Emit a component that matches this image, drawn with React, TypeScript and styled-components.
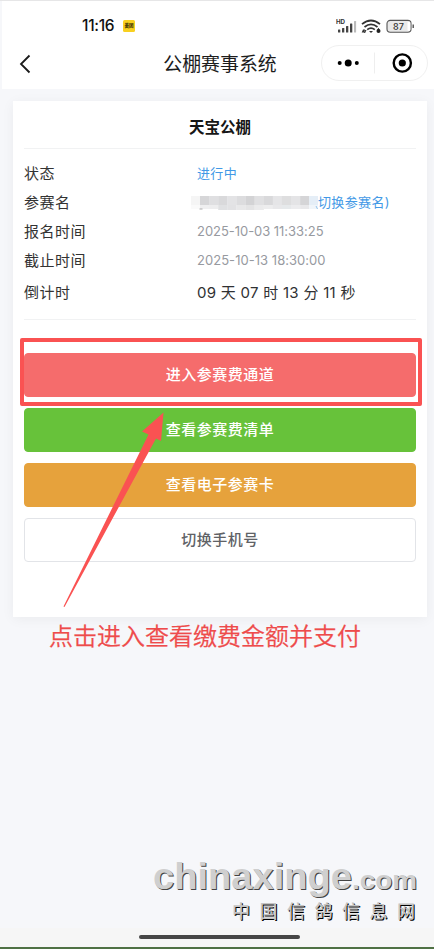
import React from "react";
import styled, { createGlobalStyle } from "styled-components";

const Global = createGlobalStyle`
  * { box-sizing: border-box; }
  body { margin: 0; background: #f6f7fa; font-family: Inter, "Noto Sans CJK SC", sans-serif; }
`;

const Screen = styled.div`
  position: relative;
  width: 434px;
  height: 949px;
  overflow: hidden;
  display: flex;
  flex-direction: column;
  background: #f6f7fa;
  border-top: 1px solid #e6e6e7;
  border-bottom: 2px solid #4f7144;
`;

const Header = styled.header`
  height: 88px;
  flex: none;
  margin-left: 2px;
  background: #fff;
`;

const StatusBar = styled.div`
  height: 36px;
  padding: 14px 20px 0 80px;
  display: flex;
  align-items: center;
`;

const Clock = styled.span`
  width: 33px;
  font-size: 15.5px;
  line-height: 22px;
  font-weight: 500;
  letter-spacing: -0.3px;
  white-space: nowrap;
  color: #111;
`;

const AppBadge = styled.span`
  width: 12px;
  height: 12px;
  margin-left: 8px;
  border-radius: 1.5px;
  background: #f8d020;
  display: flex;
  align-items: center;
  justify-content: center;
  font-size: 4.5px;
  line-height: 12px;
  font-weight: 900;
  color: #3a3005;
  white-space: nowrap;
`;

const StatusIcons = styled.svg`
  display: block;
  margin-left: auto;
`;

const NavBar = styled.div`
  height: 52px;
  display: grid;
  grid-template-columns: 110px 1fr 110px;
  align-items: center;
`;

const BackIcon = styled.svg`
  margin-left: 16px;
  margin-top: 1px;
`;

const Title = styled.h1`
  margin: 3px 0 0 4px;
  text-align: center;
  font-size: 18.9px;
  line-height: 28px;
  font-weight: 400;
  color: #1c1c1c;
`;

const Capsule = styled.div`
  width: 107px;
  height: 36px;
  margin-left: -3px;
  border: 1px solid #f0f0f0;
  border-radius: 18px;
`;

const Card = styled.main`
  flex: none;
  width: 414px;
  height: 516px;
  margin: 12px 0 0 13px;
  padding: 0 11px;
  background: #fff;
  box-shadow: 0 2px 12px rgba(0, 0, 0, 0.05);
`;

const CardTitle = styled.h2`
  height: 48px;
  margin: 0;
  padding-top: 2px;
  border-bottom: 1px solid #f1f2f3;
  text-align: center;
  font-size: 15.5px;
  line-height: 49px;
  font-weight: 700;
  color: #161616;
`;

const Details = styled.dl`
  height: 171px;
  margin: 0;
  padding-top: 10px;
  border-bottom: 1px solid #f1f2f3;
`;

const Row = styled.div<{ $h?: number }>`
  height: ${(p) => p.$h ?? 29}px;
  display: grid;
  grid-template-columns: 173px 1fr;
  align-items: center;
`;

const Label = styled.dt`
  font-size: 15px;
  line-height: 29px;
  letter-spacing: 0.5px;
  color: #333;
`;

const Value = styled.dd<{ $tone: "link" | "muted" | "strong" }>`
  margin: 0;
  display: flex;
  align-items: center;
  white-space: pre;
  line-height: 29px;
  font-size: ${(p) => (p.$tone === "strong" ? 15 : 13)}px;
  letter-spacing: ${(p) => (p.$tone === "link" ? 0.35 : 0)}px;
  color: ${(p) => ({ link: "#4299e6", muted: "#979a9f", strong: "#303133" })[p.$tone]};
`;

const DateText = styled.span<{ $spacing: number }>`
  font-size: 13px;
  letter-spacing: ${(p) => p.$spacing}px;
`;

const Countdown = styled.span`
  letter-spacing: 0.27px;
`;

const Mosaic = styled.svg`
  flex: none;
  margin-left: -6px;
`;

const Actions = styled.div`
  padding-top: 33px;
  display: flex;
  flex-direction: column;
  gap: 11px;
`;

const Button = styled.button<{ $bg: string; $fg?: string; $edge?: string }>`
  height: 44px;
  width: 392px;
  padding: 0 0 1px;
  border: 1px solid ${(p) => p.$edge ?? p.$bg};
  border-radius: 4px;
  background: ${(p) => p.$bg};
  color: ${(p) => p.$fg ?? "#fff"};
  font: 500 15px/42px Inter, "Noto Sans CJK SC", sans-serif;
  letter-spacing: 0.5px;
`;

const Highlight = styled.div`
  position: absolute;
  left: 20px;
  top: 337px;
  width: 402px;
  height: 68px;
  border: 4px solid #fa5252;
  border-radius: 2px;
`;

const Arrow = styled.svg`
  position: absolute;
  left: 60px;
  top: 409px;
`;

const Hint = styled.p`
  position: absolute;
  left: 49px;
  top: 618px;
  margin: 0;
  font-size: 24px;
  line-height: 36px;
  font-weight: 350;
  white-space: nowrap;
  color: #ee4b4b;
  -webkit-text-stroke: 0.25px #ee4b4b;
`;

const HomeBar = styled.footer`
  height: 19px;
  margin-top: auto;
  display: flex;
  padding: 7px 0 0 139px;
  background: #f6f6f6;
`;

const HomeIndicator = styled.span`
  width: 161px;
  height: 4px;
  border-radius: 2px;
  background: #464646;
`;

const Watermark = styled.svg`
  position: absolute;
  left: 140px;
  top: 849px;
`;

const blocks = [
  "#f5f5f5", "#d6d6d8", "#dfdfe1", "#d9d9db", "#e3e3e5", "#dcdcde", "#d3d3d5",
  "#e0e0e2", "#d9d9db", "#e5e5e7", "#dededf", "#e4e4e6", "#d5d5d7", "#e5eef7",
];
const lowerBlocks = [
  "#fafafa", "#efeff0", "#ededee", "#e0e1e3", "#e2e2e4", "#e8e8e9", "#e4e4e5",
  "#ebebec", "#ededee", "#e8e8ea", "#e6e9eb", "#ececee", "#e8e8ea", "#f0f5fa",
];
const blockX = (i: number) => (i === 0 ? 0 : 9 + (i - 1) * 9.1);

const actions = [
  { text: "进入参赛费通道", bg: "#f56c6c" },
  { text: "查看参赛费清单", bg: "#67c23a" },
  { text: "查看电子参赛卡", bg: "#e6a23c" },
  { text: "切换手机号", bg: "#ffffff", fg: "#606266", edge: "#e2e4e8" },
];

const latin = { fontFamily: "Liberation Sans", fontWeight: 700 } as const;

function WatermarkText({ dx, fill, cjkFill }: { dx: number; fill: string; cjkFill: string }) {
  return (
    <g transform={`translate(${dx} ${dx})`}>
      <g fill={fill}>
        <text x="13" y="39" {...latin} fontSize="36" textLength="199" lengthAdjust="spacingAndGlyphs">chinaxinge</text>
        <text x="212" y="39" {...latin} fontSize="26.5" textLength="65" lengthAdjust="spacingAndGlyphs">.com</text>
      </g>
      <text x="92" y="67.5" fill={cjkFill} fontFamily="Noto Sans CJK SC" fontWeight="500" fontSize="18" letterSpacing="9.5">中国信鸽信息网</text>
    </g>
  );
}

export default function App() {
  return (
    <Screen>
      <Global />
      <Header>
        <StatusBar>
          <Clock>11:16</Clock>
          <AppBadge>美团</AppBadge>
          <StatusIcons width="78" height="18" viewBox="0 0 78 18">
            <text x="0" y="7" fontSize="6.2" fontWeight="700" fill="#333">HD</text>
            <g fill="#444">
              <rect x="2" y="12.5" width="2.3" height="3" rx="0.5" />
              <rect x="6" y="11" width="2.3" height="4.5" rx="0.5" />
              <rect x="10" y="9" width="2.3" height="6.5" rx="0.5" />
              <rect x="14" y="6.5" width="2.3" height="9" rx="0.5" />
              <rect x="18" y="4" width="2.1" height="11.5" rx="0.5" fill="#bbb" />
            </g>
            <g fill="none" stroke="#333" strokeWidth="1.8">
              <path d="M26 7.1Q35-.2 44 7.1" />
              <path d="M28.5 10Q35 4.8 41.5 10" />
              <path d="M31.2 12.6Q35 9.8 38.8 12.6" />
            </g>
            <path d="M33 14l2 2 2-2zM27 12.5h2.2l-1.3 3h-2.2zM30.5 13l-1.4 3h-1.2l1.3-3z" fill="#333" />
            <circle cx="42.5" cy="14" r="2" fill="#222" />
            <path d="M41 13l1.5-2.2 1.4 2.2z" fill="#222" />
            <rect x="51" y="3.4" width="24" height="11.8" rx="3.2" fill="#e9e9e9" stroke="#555" strokeWidth="1.1" />
            <rect x="71.5" y="4.5" width="2.8" height="9.6" rx="1.3" fill="#fff" />
            <path d="M77.2 7.5v3.6" stroke="#444" strokeWidth="1.3" />
            <text x="57" y="12.6" fontSize="9" fontWeight="500" fill="#333">87</text>
          </StatusIcons>
        </StatusBar>
        <NavBar>
          <BackIcon width="14" height="20" viewBox="0 0 14 20">
            <path d="M11.5 1.5L3 10l8.5 8.5" fill="none" stroke="#1a1a1a" strokeWidth="1.8" />
          </BackIcon>
          <Title>公棚赛事系统</Title>
          <Capsule>
            <svg width="105" height="34" viewBox="0 0 105 34" display="block">
              <circle cx="17.7" cy="17" r="2" />
              <circle cx="26.2" cy="17" r="3.5" />
              <circle cx="34.8" cy="17" r="2" />
              <path d="M52.5 6.5v21" stroke="#eee" />
              <circle cx="80.3" cy="17" r="8.6" fill="none" stroke="#000" strokeWidth="2.4" />
              <circle cx="80.3" cy="17" r="3.6" />
            </svg>
          </Capsule>
        </NavBar>
      </Header>

      <Card>
        <CardTitle>天宝公棚</CardTitle>
        <Details>
          <Row>
            <Label>状态</Label>
            <Value $tone="link">进行中</Value>
          </Row>
          <Row>
            <Label>参赛名</Label>
            <Value $tone="link">
              <Mosaic width="127" height="18" viewBox="0 0 127 18">
                {blocks.map((c, i) => (
                  <rect key={i} x={blockX(i)} y="2" width="9.3" height="9" fill={c} />
                ))}
                {lowerBlocks.map((c, i) => (
                  <rect key={i} x={blockX(i)} y="11" width="9.3" height={i > 2 && i < 8 ? 5 : 4} fill={c} />
                ))}
                <path d="M8.5 15h3" stroke="#999" strokeWidth="0.8" />
                <path d="M125 12l1.5 3" stroke="#7eb7eb" strokeWidth="0.8" />
              </Mosaic>
              切换参赛名)
            </Value>
          </Row>
          <Row>
            <Label>报名时间</Label>
            <Value $tone="muted"><DateText $spacing={-0.04}>2025-10-03 11:33:25</DateText></Value>
          </Row>
          <Row>
            <Label>截止时间</Label>
            <Value $tone="muted"><DateText $spacing={0.04}>2025-10-13 18:30:00</DateText></Value>
          </Row>
          <Row $h={34}>
            <Label>倒计时</Label>
            <Value $tone="strong"><Countdown>09 天 07 时 13 分 11 秒</Countdown></Value>
          </Row>
        </Details>
        <Actions>
          {actions.map((a) => (
            <Button key={a.text} $bg={a.bg} $fg={a.fg} $edge={a.edge}>{a.text}</Button>
          ))}
        </Actions>
      </Card>

      <HomeBar>
        <HomeIndicator />
      </HomeBar>

      <Highlight />
      <Arrow width="110" height="200" viewBox="60 410 110 200">
        <path d="M163.5 412.5L142 431.5L148.5 434.5L63.5 606.5L64.5 607L156 438.5L161 441Z" fill="#fa5252" />
      </Arrow>
      <Hint>点击进入查看缴费金额并支付</Hint>
      <Watermark width="294" height="80" viewBox="0 0 294 80">
        <WatermarkText dx={1} fill="#444" cjkFill="#000" />
        <WatermarkText dx={0} fill="#cfcfcf" cjkFill="#c4c4c4" />
      </Watermark>
    </Screen>
  );
}
